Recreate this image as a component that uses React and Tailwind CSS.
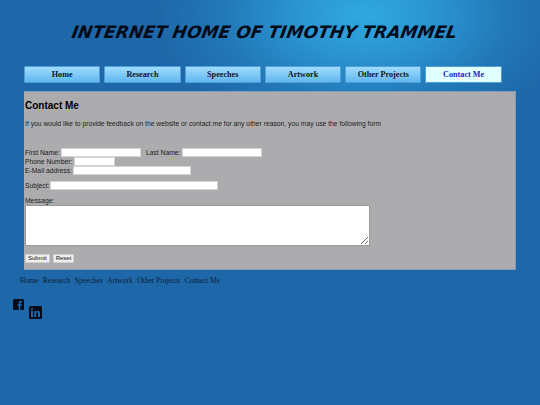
const NAV = ['Home', 'Research', 'Speeches', 'Artwork', 'Other Projects', 'Contact Me']
const FOOT = ['Home', 'Research', 'Speeches', 'Artwork', 'Other Projects', 'Contact Me']

function Field({ className = '' }) {
  return <input type="text" className={`h-[9px] bg-white border border-[#d4d4d4] outline-none ${className}`} />
}

export default function App() {
  return (
    <div className="relative w-[540px] h-[405px] overflow-hidden bg-[#1e67a8] font-['Liberation_Sans',sans-serif]">
      {/* background glow, sits behind everything */}
      <div className="absolute inset-0 bg-[radial-gradient(ellipse_210px_125px_at_365px_15px,#2fa9e0_0%,#2a93d0_35%,#2277b6_70%,#1e67a8_100%)]" />
      <div className="relative">
        <div className="h-[66px] pt-[22px] pl-[72px]">
          <h1 className="origin-left -skew-x-[10deg] text-[17px] leading-[20px] font-bold italic text-[#050a18] whitespace-nowrap tracking-[0.08px] font-['DejaVu_Sans',sans-serif]">
            INTERNET HOME OF TIMOTHY TRAMMEL
          </h1>
        </div>

        <nav className="flex gap-[4px] pl-[24px]">
          {NAV.map((item) => (
            <a
              key={item}
              className={`w-[76.3px] h-[17px] pt-[1px] flex items-center justify-center rounded-[1px] text-[8.2px] font-bold font-['Liberation_Serif',serif] border border-[#4f9fd8] ${
                item === 'Contact Me'
                  ? 'bg-[#e0ffff] text-[#1a1ac8]'
                  : 'bg-[linear-gradient(#9fdcff,#62b6f0)] text-[#10141c]'
              }`}
            >
              {item}
            </a>
          ))}
        </nav>

        <main className="ml-[24px] mt-[8px] w-[492px] h-[179px] pl-[1px] bg-[#acacae] border-r border-b border-t border-[#7f9db8] text-[6.75px] leading-[9px] text-[#1c1c1c]">
          <h2 className="text-[10px] leading-[13px] font-bold text-black pt-[7px]">Contact Me</h2>
          <p className="mt-[7px]">If you would like to provide feedback on the website or contact me for any other reason, you may use the following form</p>

          <div className="mt-[20px] flex items-center h-[9px]">
            <span>First Name:</span>
            <Field className="w-[80px] ml-[1px]" />
            <span className="ml-[5px]">Last Name:</span>
            <Field className="w-[80px] ml-[2px]" />
          </div>
          <div className="flex items-center h-[9px]">
            <span>Phone Number:</span>
            <Field className="w-[41px] ml-[1.5px]" />
          </div>
          <div className="flex items-center h-[9px]">
            <span>E-Mail address:</span>
            <Field className="w-[118px] ml-[1px]" />
          </div>
          <div className="mt-[6px] flex items-center h-[9px]">
            <span>Subject:</span>
            <Field className="w-[168px] ml-[1px]" />
          </div>
          <div className="mt-[6px]">Message:</div>
          <textarea className="block w-[345px] h-[41px] bg-white border border-[#9a9a9a] outline-none" />
          <div className="mt-[8px] flex gap-[3px]">
            <button className="h-[9px] px-[2px] bg-[#efefef] border border-[#d0d0d0] rounded-[1px] text-[6px] leading-[7px] text-[#111]">Submit</button>
            <button className="h-[9px] px-[2px] bg-[#efefef] border border-[#d0d0d0] rounded-[1px] text-[6px] leading-[7px] text-[#111]">Reset</button>
          </div>
        </main>

        <footer className="flex gap-[4.5px] pl-[20px] mt-[6px] text-[7.5px] leading-[10px] text-[#0c2238] font-['Liberation_Serif',serif]">
          {FOOT.map((item) => <a key={item}>{item}</a>)}
        </footer>

        <div className="flex items-start pl-[13px] mt-[13px] gap-[5px]">
          <svg width="11" height="11" viewBox="0 0 11 11">
            <rect width="11" height="11" rx="1.5" fill="#050a18" />
            <path d="M7.4 11V6.8h1.3l.2-1.6H7.4v-1c0-.5.2-.8.8-.8h.8V1.9c-.2 0-.7-.1-1.2-.1-1.2 0-2 .7-2 2.1v1.3H4.5v1.6h1.3V11z" fill="#1e67a8" />
          </svg>
          <svg width="13" height="13" viewBox="0 0 13 13" className="mt-[7px]">
            <rect width="13" height="13" rx="1.5" fill="#050a18" />
            <rect x="2" y="5" width="2" height="6" fill="#1e67a8" />
            <circle cx="3" cy="3.1" r="1.1" fill="#1e67a8" />
            <path d="M5.2 5h1.9v.9c.4-.6 1-1.05 1.9-1.05 1.5 0 2 1 2 2.5V11h-2V7.7c0-.7-.2-1.2-.8-1.2-.7 0-1 .5-1 1.2V11h-2z" fill="#1e67a8" />
          </svg>
        </div>
      </div>
    </div>
  )
}
